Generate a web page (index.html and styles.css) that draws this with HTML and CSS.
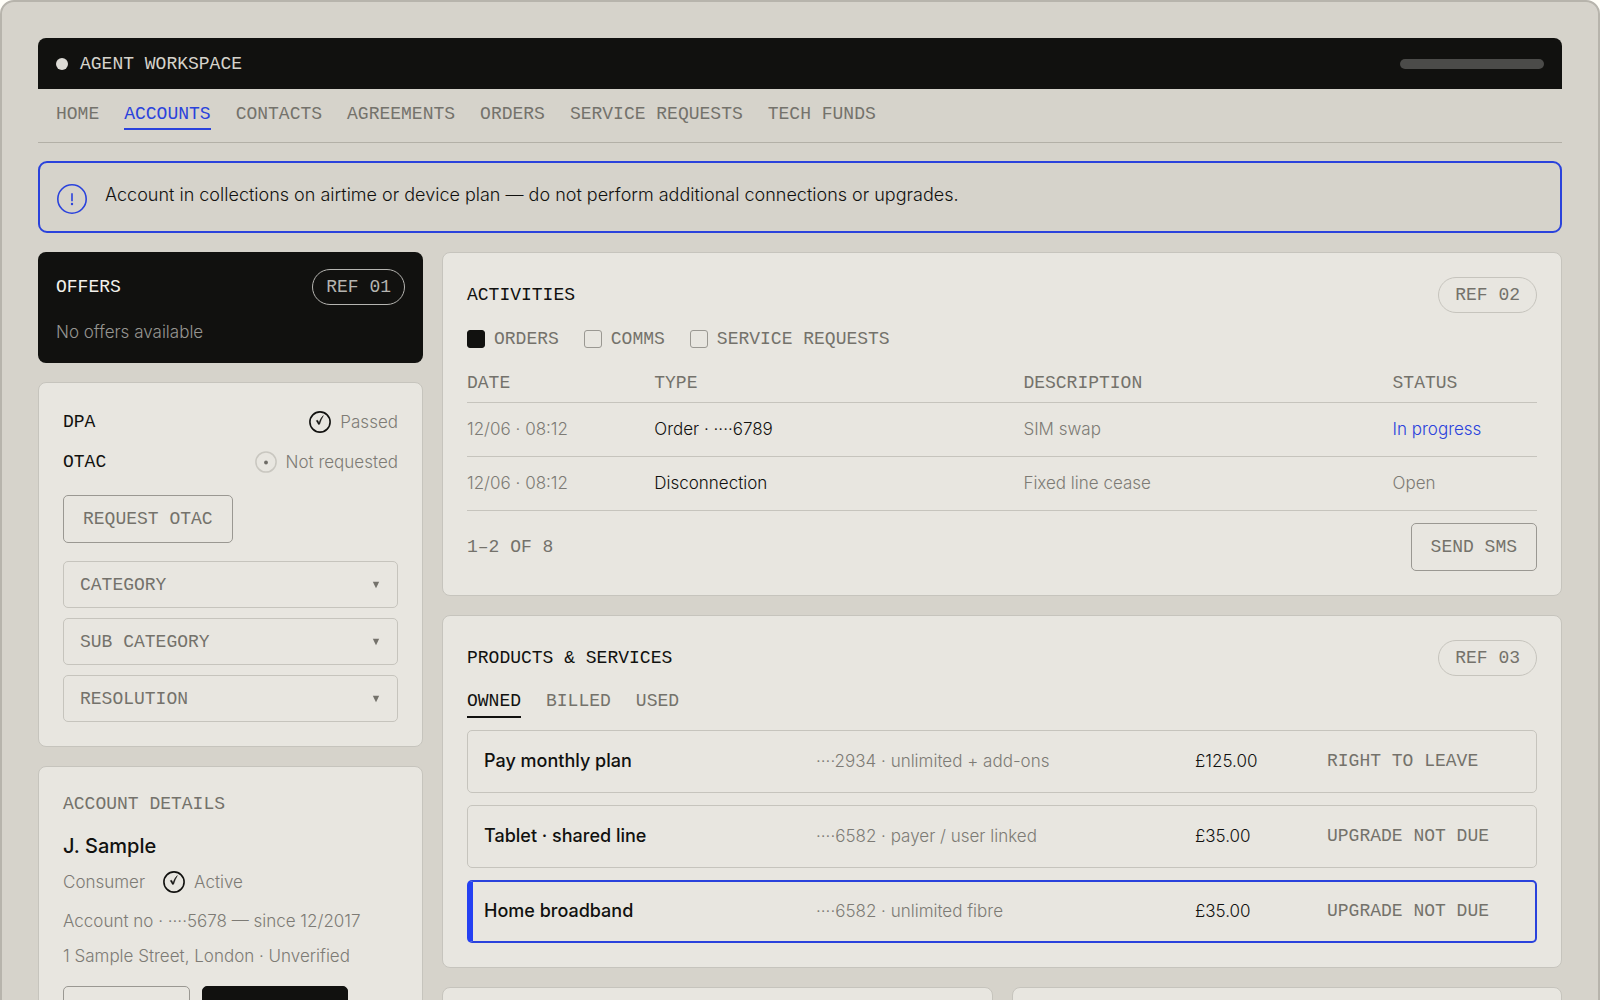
FILE: index.html
```html
<!DOCTYPE html>
<html lang="en">
<head>
<meta charset="utf-8">
<meta name="viewport" content="width=device-width, initial-scale=1">
<title>Agent workspace</title>
<link rel="stylesheet" href="styles.css">
</head>
<body>
<div class="frame">
  <header class="topbar">
    <span class="topbar-dot"></span>
    <span class="label">Agent workspace</span>
    <span class="topbar-meter"></span>
  </header>
  <nav class="nav label" aria-label="Main">
    <a href="#home">Home</a>
    <a href="#accounts" class="is-active" aria-current="page">Accounts</a>
    <a href="#contacts">Contacts</a>
    <a href="#agreements">Agreements</a>
    <a href="#orders">Orders</a>
    <a href="#requests">Service requests</a>
    <a href="#funds">Tech funds</a>
  </nav>

  <div class="alert" role="alert">
    <svg class="alert-icon" viewBox="0 0 30 30" aria-hidden="true">
      <circle cx="15" cy="15" r="14.2" fill="none" stroke="currentColor" stroke-width="1.6"/>
      <path d="M15 9.200v8" stroke="currentColor" stroke-width="1.6" fill="none"/>
      <circle cx="15" cy="20" r="1.2" fill="currentColor"/>
    </svg>
    <p>Account in collections on airtime or device plan — do not perform additional connections or upgrades.</p>
  </div>

  <div class="columns">
    <aside class="side">
      <section class="offers">
        <div class="card-head">
          <h2 class="label">Offers</h2>
          <span class="ref label">Ref 01</span>
        </div>
        <p>No offers available</p>
      </section>

      <section class="card checks">
        <div class="check-row">
          <h2 class="label">DPA</h2>
          <span class="state">
            <svg class="state-icon" viewBox="0 0 22 22" aria-hidden="true">
              <circle cx="11" cy="11" r="10.1" fill="none" stroke="#11110f" stroke-width="1.6"/>
              <path d="M7.300 9.700l1.300-.5 1.500 2.700c.7-2.500 1.900-4.900 4.200-7.300-1.600 2.800-2.800 5.600-3.700 8.600l-1.100.2z" fill="#11110f" stroke="#11110f" stroke-width=".5" stroke-linejoin="round"/>
            </svg>
            Passed
          </span>
        </div>
        <div class="check-row">
          <h2 class="label">OTAC</h2>
          <span class="state">
            <svg class="state-icon" viewBox="0 0 22 22" aria-hidden="true">
              <circle cx="11" cy="11" r="10.1" fill="none" stroke="#c9c7c0" stroke-width="1.5"/>
              <circle cx="11" cy="11.500" r="1.900" fill="#6d6b65"/>
            </svg>
            Not requested
          </span>
        </div>
        <button type="button" class="btn label">Request OTAC</button>
        <div class="picks">
          <div class="pick">
            <select class="label" aria-label="Category"><option>Category</option></select>
            <svg viewBox="0 0 8 8" aria-hidden="true"><path d="M.8.800h6.400L4 7.200z" fill="currentColor"/></svg>
          </div>
          <div class="pick">
            <select class="label" aria-label="Sub category"><option>Sub category</option></select>
            <svg viewBox="0 0 8 8" aria-hidden="true"><path d="M.8.800h6.400L4 7.200z" fill="currentColor"/></svg>
          </div>
          <div class="pick">
            <select class="label" aria-label="Resolution"><option>Resolution</option></select>
            <svg viewBox="0 0 8 8" aria-hidden="true"><path d="M.8.800h6.400L4 7.200z" fill="currentColor"/></svg>
          </div>
        </div>
      </section>

      <section class="card account">
        <h2 class="label quiet">Account details</h2>
        <p class="account-name">J. Sample</p>
        <p class="account-kind">
          <span>Consumer</span>
          <span class="state">
            <svg class="state-icon" viewBox="0 0 22 22" aria-hidden="true">
              <circle cx="11" cy="11" r="10.1" fill="none" stroke="#11110f" stroke-width="1.6"/>
              <path d="M7.300 9.700l1.300-.5 1.500 2.700c.7-2.500 1.900-4.900 4.200-7.300-1.600 2.800-2.800 5.600-3.700 8.600l-1.100.2z" fill="#11110f" stroke="#11110f" stroke-width=".5" stroke-linejoin="round"/>
            </svg>
            Active
          </span>
        </p>
        <p class="account-line">Account no · ····5678 — since 12/2017</p>
        <p class="account-line">1 Sample Street, London · Unverified</p>
        <div class="account-actions">
          <button type="button" class="btn" aria-label="Secondary action"></button>
          <button type="button" class="btn btn-solid" aria-label="Primary action"></button>
        </div>
      </section>
    </aside>

    <main class="main">
      <section class="card activities">
        <div class="card-head">
          <h2 class="label">Activities</h2>
          <span class="ref label">Ref 02</span>
        </div>
        <div class="filters label">
          <label><input type="checkbox" checked> Orders</label>
          <label><input type="checkbox"> Comms</label>
          <label><input type="checkbox"> Service requests</label>
        </div>
        <table class="log">
          <thead>
            <tr class="label"><th class="col-date">Date</th><th class="col-wide">Type</th><th class="col-wide">Description</th><th>Status</th></tr>
          </thead>
          <tbody>
            <tr><td>12/06 · 08:12</td><td class="strong">Order · ····6789</td><td>SIM swap</td><td class="live">In progress</td></tr>
            <tr><td>12/06 · 08:12</td><td class="strong">Disconnection</td><td>Fixed line cease</td><td>Open</td></tr>
          </tbody>
        </table>
        <div class="log-foot">
          <span class="label">1–2 of 8</span>
          <button type="button" class="btn label">Send SMS</button>
        </div>
      </section>

      <section class="card products">
        <div class="card-head">
          <h2 class="label">Products &amp; services</h2>
          <span class="ref label">Ref 03</span>
        </div>
        <div class="tabs" role="tablist">
          <button type="button" role="tab" aria-selected="true" class="tab label is-active">Owned</button>
          <button type="button" role="tab" aria-selected="false" class="tab label">Billed</button>
          <button type="button" role="tab" aria-selected="false" class="tab label">Used</button>
        </div>
        <ul class="product-list">
          <li class="product">
            <span class="product-name">Pay monthly plan</span>
            <span>····2934 · unlimited + add-ons</span>
            <span class="strong">£125.00</span>
            <span class="label">Right to leave</span>
          </li>
          <li class="product">
            <span class="product-name">Tablet · shared line</span>
            <span>····6582 · payer / user linked</span>
            <span class="strong">£35.00</span>
            <span class="label">Upgrade not due</span>
          </li>
          <li class="product is-selected">
            <span class="product-name">Home broadband</span>
            <span>····6582 · unlimited fibre</span>
            <span class="strong">£35.00</span>
            <span class="label">Upgrade not due</span>
          </li>
        </ul>
      </section>

      <div class="pair">
        <section class="card blank"></section>
        <section class="card blank"></section>
      </div>
    </main>
  </div>
</div>
</body>
</html>
```
FILE: styles.css
```css
:root {
  --ink: #11110f;
  --text: #2a2926;
  --muted: #7d7b75;
  --label: #74726b;
  --ground: #d6d3cb;
  --card: #e8e6e0;
  --line: #c6c4bd;
  --edge: #9a9892;
  --blue: #2a42dc;
}

* { box-sizing: border-box; }

html {
  height: 100%;
  overflow: hidden;
  background: #fffef8;
}

body {
  height: 100%;
  margin: 0;
  overflow: hidden;
  font: 300 17px/22px Inter, "Liberation Sans", sans-serif;
  color: var(--muted);
}

h2, p, ul { margin: 0; padding: 0; }

.label {
  font: 400 18px/22px "Liberation Mono", monospace;
  text-transform: uppercase;
  color: var(--label);
}

h2.label { color: var(--ink); }
h2.quiet { color: var(--label); }
.strong { color: var(--ink); }

.frame {
  padding: 36px;
  border: 2px solid #b7b4ac;
  border-radius: 14px;
  background: var(--ground);
}

.topbar {
  display: flex;
  align-items: center;
  gap: 12px;
  height: 51px;
  padding: 0 18px;
  border-radius: 8px 8px 0 0;
  background: var(--ink);
}

.topbar .label { color: var(--ground); }

.topbar-dot {
  width: 12px;
  height: 12px;
  border-radius: 50%;
  background: #dddbd6;
}

.topbar-meter {
  width: 144px;
  height: 10px;
  margin-left: auto;
  border-radius: 5px;
  background: #4b4b49;
}

.nav {
  display: flex;
  gap: 25px;
  padding: 14px 18px 12px;
  border-bottom: 1px solid #b3b0a7;
}

.nav a {
  padding-bottom: 3px;
  border-bottom: 2px solid transparent;
  color: inherit;
  text-decoration: none;
}

.nav .is-active {
  border-color: var(--blue);
  color: var(--blue);
}

.alert {
  display: flex;
  align-items: flex-start;
  gap: 18px;
  margin: 18px 0 19px;
  padding: 17px;
  border: 2px solid var(--blue);
  border-radius: 9px;
  font-size: 18px;
  line-height: 30px;
  color: var(--ink);
}

.alert-icon {
  flex: none;
  width: 30px;
  height: 30px;
  margin-top: 4px;
  color: var(--blue);
}

.columns {
  display: grid;
  grid-template-columns: minmax(0, 385fr) minmax(0, 1120fr);
  gap: 19px;
  align-items: start;
}

.side, .main {
  display: grid;
  gap: 19px;
}

.card {
  padding: 24px;
  border: 1px solid var(--line);
  border-radius: 8px;
  background: var(--card);
}

.card-head {
  display: flex;
  align-items: center;
  justify-content: space-between;
}

.ref {
  padding: 6px 16px;
  border: 1px solid var(--line);
  border-radius: 18px;
}

.offers {
  padding: 17px 18px 20px;
  border-radius: 8px;
  background: var(--ink);
  color: #969591;
}

.offers h2.label { color: #f3f1ec; }
.offers .ref {
  padding: 6px 13px;
  border-color: #b5b4b0;
  color: #b5b4b0;
}
.offers p { margin-top: 16px; }

.btn {
  min-height: 48px;
  padding: 0 19px;
  border: 1px solid var(--edge);
  border-radius: 5px;
  background: transparent;
}

.checks { padding-top: 28px; }

.check-row {
  display: flex;
  align-items: center;
  justify-content: space-between;
  margin-bottom: 18px;
}

.state {
  display: inline-flex;
  align-items: center;
  gap: 9px;
}

.state-icon {
  width: 22px;
  height: 22px;
}

.checks .btn { margin-top: 4px; }

.picks {
  display: grid;
  gap: 10px;
  margin-top: 18px;
}

.pick {
  display: grid;
  align-items: center;
}

.pick select, .pick svg { grid-area: 1 / 1; }

.pick select {
  width: 100%;
  height: 47px;
  padding: 0 16px;
  border: 1px solid var(--line);
  border-radius: 5px;
  background: transparent;
  appearance: none;
}

.pick svg {
  width: 8px;
  height: 8px;
  margin-right: 18px;
  justify-self: end;
  color: var(--label);
  pointer-events: none;
}

.account { padding-top: 26px; }

.account-name {
  margin-top: 19px;
  font-size: 20px;
  font-weight: 500;
  line-height: 24px;
  color: var(--ink);
}

.account-kind {
  display: flex;
  gap: 18px;
  margin-top: 13px;
}

.account-line { margin-top: 13px; }
.account-kind + .account-line { margin-top: 17px; }

.account-actions {
  display: flex;
  gap: 12px;
  margin-top: 19px;
}

.account-actions .btn { width: 127px; }
.account-actions .btn-solid {
  width: 146px;
  border-color: var(--ink);
  background: var(--ink);
}

.filters {
  display: flex;
  gap: 25px;
  margin-top: 15px;
}

.filters label {
  display: flex;
  align-items: center;
  gap: 9px;
}

.filters input {
  width: 18px;
  height: 18px;
  margin: 0;
  border: 1px solid var(--edge);
  border-radius: 3px;
  appearance: none;
}

.filters input:checked {
  border-color: var(--ink);
  background: var(--ink);
}

.log {
  width: 100%;
  margin-top: 15px;
  border-collapse: collapse;
  table-layout: fixed;
}

.log th, .log td {
  padding: 0;
  border-bottom: 1px solid var(--line);
  text-align: left;
}

.log th {
  height: 37px;
  font-weight: 400;
}

.log td { height: 54px; }
.col-date { width: 17.5%; }
.col-wide { width: 34.5%; }
.log .live { color: var(--blue); }

.log-foot {
  display: flex;
  align-items: center;
  justify-content: space-between;
  margin-top: 12px;
}

.tabs {
  display: flex;
  gap: 25px;
  margin-top: 14px;
}

.tab {
  padding: 0 0 4px;
  border: 0;
  border-bottom: 2px solid transparent;
  background: none;
}

.tab.is-active {
  border-color: var(--ink);
  color: var(--ink);
}

.product-list {
  display: grid;
  gap: 12px;
  margin-top: 12px;
  list-style: none;
}

.product {
  display: grid;
  grid-template-columns: 332fr 379fr 132fr 193fr;
  align-items: center;
  min-height: 63px;
  padding: 0 16px;
  border: 1px solid var(--line);
  border-radius: 5px;
}

.product.is-selected {
  padding: 0 15px 0 11px;
  border: 2px solid var(--blue);
  border-left: 6px solid #2440f2;
}

.product-name {
  font-size: 18px;
  font-weight: 500;
  color: var(--ink);
}

.pair {
  display: grid;
  grid-template-columns: 1fr 1fr;
  gap: 19px;
}

.blank { min-height: 220px; }
```
